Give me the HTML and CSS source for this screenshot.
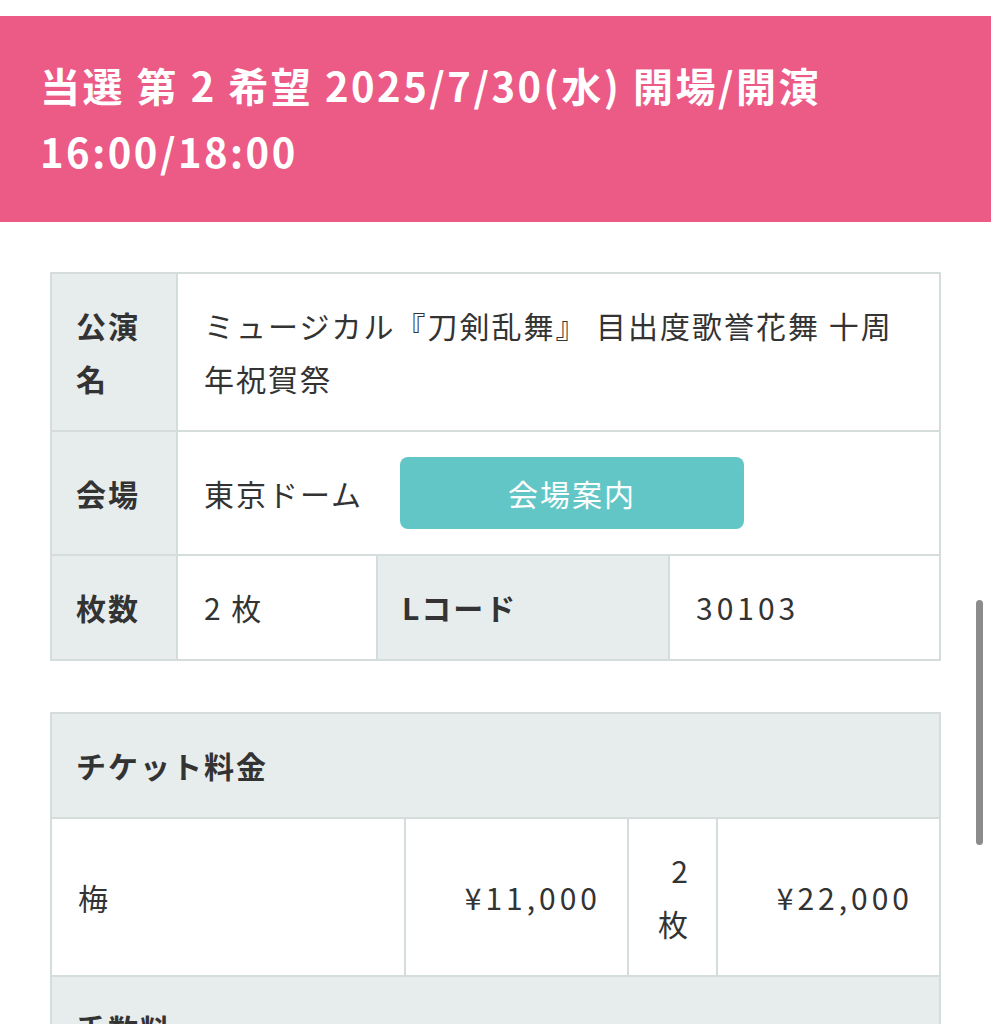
FILE: index.html
```html
<!DOCTYPE html>
<html lang="ja">
<head>
    <meta charset="UTF-8">
    <meta name="viewport" content="width=device-width, initial-scale=1.0">
    <link rel="stylesheet" href="styles.css">
    <title>当選詳細</title>
</head>
<body>
    <div class="result-head">
        <h1>当選 第 2 希望 2025/7/30(水) 開場/開演 16:00/18:00</h1>
    </div>

    <div class="content">
        <div class="info-table">
            <div class="cell label">公演名</div>
            <div class="cell value wide">ミュージカル『刀剣乱舞』 目出度歌誉花舞 十周年祝賀祭</div>

            <div class="cell label">会場</div>
            <div class="cell value wide venue">
                <span>東京ドーム</span>
                <a class="venue-btn" href="#">会場案内</a>
            </div>

            <div class="cell label">枚数</div>
            <div class="cell value">2 枚</div>
            <div class="cell label">Lコード</div>
            <div class="cell value digits">30103</div>
        </div>

        <div class="price-table">
            <div class="cell label full">チケット料金</div>

            <div class="cell value">梅</div>
            <div class="cell value num digits">¥11,000</div>
            <div class="cell value num">2 枚</div>
            <div class="cell value num digits">¥22,000</div>

            <div class="cell label full">手数料</div>
            <div class="cell value">発券手数料</div>
            <div class="cell value num digits">¥110</div>
            <div class="cell value num">2 枚</div>
            <div class="cell value num digits">¥220</div>
        </div>
    </div>

    <div class="scroll-thumb"></div>
</body>
</html>
```

FILE: styles.css
```css
body {
    margin: 0;
    background: #fff;
    color: #333;
    font-family: "Noto Sans CJK JP", "Noto Sans", sans-serif;
}

.result-head {
    margin-top: 16px;
    background-color: #ec5a86;
    padding: 36px 40px 38px;
}

.result-head h1 {
    margin: 0;
    color: #fff;
    font-size: 40px;
    font-weight: 700;
    line-height: 66px;
    letter-spacing: 2.5px;
}

.content {
    padding: 50px 50px 0;
}

.info-table,
.price-table {
    display: grid;
    gap: 2px;
    padding: 2px;
    background-color: #d5dcdc;
    font-size: 30px;
    letter-spacing: 2px;
    line-height: 53px;
}

.info-table {
    grid-template-columns: 124px 198px 290px 1fr;
}

.price-table {
    margin-top: 51px;
    grid-template-columns: 352px 221px 87px 1fr;
}

.cell {
    padding: 25px 26px;
    display: flex;
    align-items: center;
}

.label {
    background-color: #e7eced;
    font-weight: 700;
    padding-left: 24px;
}

.value {
    background-color: #fff;
}

.digits {
    letter-spacing: 4px;
}

.wide {
    grid-column: span 3;
}

.full {
    grid-column: 1 / -1;
}

.num {
    justify-content: flex-end;
    text-align: right;
}

.venue {
    gap: 37px;
}

.venue-btn {
    display: flex;
    align-items: center;
    justify-content: center;
    width: 344px;
    height: 72px;
    border-radius: 8px;
    background-color: #63c6c6;
    color: #fff;
    text-decoration: none;
}

.scroll-thumb {
    position: fixed;
    top: 600px;
    left: 976px;
    width: 7px;
    height: 245px;
    border-radius: 4px;
    background-color: #8c8c8c;
}
```
